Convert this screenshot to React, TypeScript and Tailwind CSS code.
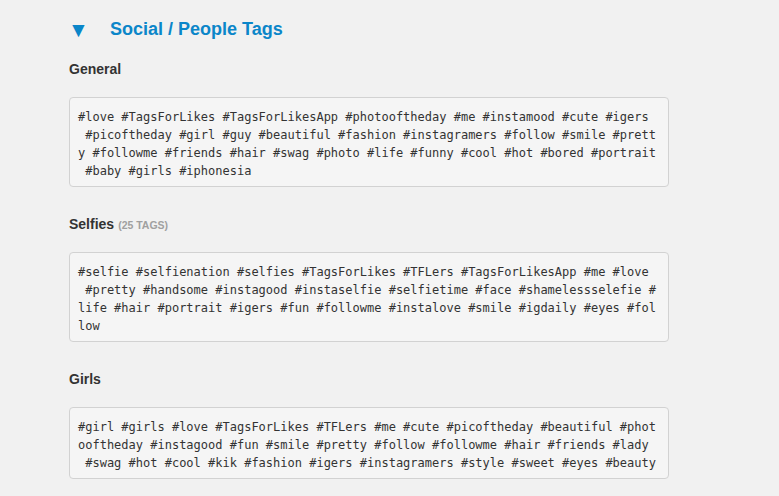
const sections: { title: string; count?: string; lines: string[] }[] = [
  {
    title: "General",
    lines: [
      "#love #TagsForLikes #TagsForLikesApp #photooftheday #me #instamood #cute #igers",
      " #picoftheday #girl #guy #beautiful #fashion #instagramers #follow #smile #prett",
      "y #followme #friends #hair #swag #photo #life #funny #cool #hot #bored #portrait",
      " #baby #girls #iphonesia",
    ],
  },
  {
    title: "Selfies",
    count: "(25 TAGS)",
    lines: [
      "#selfie #selfienation #selfies #TagsForLikes #TFLers #TagsForLikesApp #me #love",
      " #pretty #handsome #instagood #instaselfie #selfietime #face #shamelessselefie #",
      "life #hair #portrait #igers #fun #followme #instalove #smile #igdaily #eyes #fol",
      "low",
    ],
  },
  {
    title: "Girls",
    lines: [
      "#girl #girls #love #TagsForLikes #TFLers #me #cute #picoftheday #beautiful #phot",
      "ooftheday #instagood #fun #smile #pretty #follow #followme #hair #friends #lady",
      " #swag #hot #cool #kik #fashion #igers #instagramers #style #sweet #eyes #beauty",
    ],
  },
];

export default function App() {
  return (
    <div className="w-[779px] h-[496px] overflow-hidden bg-[#f1f1f1] font-['Liberation_Sans',Arial,sans-serif] text-[#333]">
      <div className="pl-[69px] pt-[16px]">
        <div className="flex items-center h-[26px]">
          <span className="-ml-[1px] w-[42px] text-[21px] leading-none text-[#0b86c9]">▼</span>
          <h2 className="text-[18px] font-bold text-[#0b86c9]">Social / People Tags</h2>
        </div>
        {sections.map((s, i) => (
          <div key={s.title} className={i === 0 ? "mt-[17px]" : "mt-[27px]"}>
            <h3 className="flex h-[20px] items-baseline gap-[4px] text-[14px] font-bold leading-[20px]">
              {s.title}
              {s.count && <span className="text-[10.5px] font-bold leading-none text-[#a0a0a0]">{s.count}</span>}
            </h3>
            <pre className="mt-[18px] w-[600px] rounded-[4px] border border-[#d2d2d2] bg-[#f5f5f5] px-[8px] pt-[10px] pb-[6px] font-['DejaVu_Sans_Mono',monospace] text-[12px] leading-[18px] text-[#333]">
              {s.lines.map((l, j) => (
                <div key={j} className="whitespace-pre">
                  {l}
                </div>
              ))}
            </pre>
          </div>
        ))}
      </div>
    </div>
  );
}
